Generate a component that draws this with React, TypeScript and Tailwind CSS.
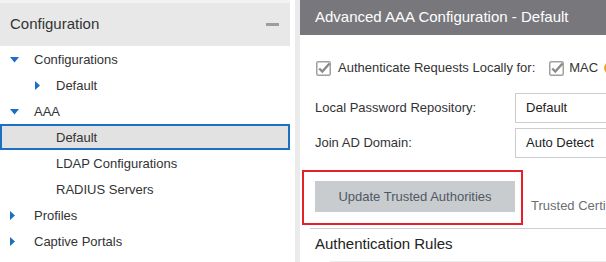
import React from "react";

function Down() {
  return (
    <svg width="9" height="6" viewBox="0 0 9 6" className="shrink-0">
      <path d="M0 0 L9 0 L4.5 5.5 Z" fill="#1d6fc4" />
    </svg>
  );
}
function Right() {
  return (
    <svg width="5" height="9" viewBox="0 0 5 9" className="shrink-0">
      <path d="M0 0 L5 4.5 L0 9 Z" fill="#1d6fc4" />
    </svg>
  );
}
function Check() {
  return (
    <svg width="15" height="15" viewBox="0 0 15 15" className="shrink-0">
      <rect x="0.75" y="0.75" width="13.5" height="13.5" rx="1.5" fill="#fff" stroke="#a0a0a0" strokeWidth="1.5" />
      <path d="M3.2 7.5 L6.3 10.6 L13.5 2.5" fill="none" stroke="#8a8a8a" strokeWidth="2.4" />
    </svg>
  );
}

function Row({
  icon,
  iconPl,
  textPl,
  label,
  selected,
}: {
  icon?: "down" | "right";
  iconPl: number;
  textPl: number;
  label: string;
  selected?: boolean;
}) {
  return (
    <li
      className={
        "relative h-[26px] flex items-center text-[13px] text-[#333] " +
        (selected ? "bg-[#e2e2e2] border-2 border-[#1c6fc3]" : "")
      }
    >
      {icon && (
        <span
          className="absolute top-0 bottom-0 flex items-center pt-[1px]"
          style={{ left: iconPl - (selected ? 2 : 0) }}
        >
          {icon === "down" ? <Down /> : <Right />}
        </span>
      )}
      <span className="pt-[1px]" style={{ paddingLeft: textPl - (selected ? 2 : 0) }}>{label}</span>
    </li>
  );
}

export default function App() {
  return (
    <div className="flex h-[262px] w-[606px] overflow-hidden bg-white font-['Liberation_Sans',Arial,sans-serif]">
      <div className="w-[295px] shrink-0">
        <div className="w-[290px] h-[46px] border-t-[3px] border-[#f3f3f3] bg-[#e8e8e8] flex items-center justify-between pl-[10px] pr-[11px]">
          <span className="text-[15px] text-[#333]">Configuration</span>
          <span className="w-[13px] h-[3px] bg-[#9d9d9d]" />
        </div>
        <ul className="w-[290px]">
          <Row icon="down" iconPl={10} textPl={34} label="Configurations" />
          <Row icon="right" iconPl={35} textPl={56} label="Default" />
          <Row icon="down" iconPl={10} textPl={34} label="AAA" />
          <Row iconPl={0} textPl={56} label="Default" selected />
          <Row iconPl={0} textPl={56} label="LDAP Configurations" />
          <Row iconPl={0} textPl={56} label="RADIUS Servers" />
          <Row icon="right" iconPl={10} textPl={34} label="Profiles" />
          <Row icon="right" iconPl={10} textPl={34} label="Captive Portals" />
        </ul>
      </div>
      <div className="w-[5px] shrink-0 bg-[#ebebeb]" />
      <div className="flex-1 min-w-0 overflow-hidden">
        <div className="h-[35px] bg-[#78787c] pl-[15px] flex items-center text-[15px] text-white whitespace-nowrap">
          Advanced AAA Configuration - Default
        </div>
        <div className="mt-[25px] h-[16px] pl-[16px] flex items-center whitespace-nowrap text-[13px] text-[#333]">
          <Check />
          <span className="ml-[7px]">Authenticate Requests Locally for:</span>
          <span className="ml-[14px]"><Check /></span>
          <span className="ml-[5px]">MAC</span>
          <span className="ml-[6px] inline-block w-[12px] h-[12px] rounded-full border-2 border-[#f0a020] shrink-0" />
        </div>
        <div className="mt-[17px] flex items-center whitespace-nowrap text-[13px]">
          <span className="pl-[15px] w-[215px] shrink-0 text-[#333]">Local Password Repository:</span>
          <div className="h-[30px] w-[150px] shrink-0 border border-[#cccccc] pl-[10px] flex items-center text-[#222]">Default</div>
        </div>
        <div className="mt-[5px] flex items-center whitespace-nowrap text-[13px]">
          <span className="pl-[15px] w-[215px] shrink-0 text-[#333]">Join AD Domain:</span>
          <div className="h-[30px] w-[150px] shrink-0 border border-[#cccccc] pl-[10px] flex items-center text-[#222]">Auto Detect</div>
        </div>
        <div className="mt-[12px] flex items-start whitespace-nowrap">
          <div className="ml-[2px] w-[221px] h-[55px] shrink-0 border-2 border-[#e5202b] pl-[11px] pt-[9px]">
            <div className="w-[200px] h-[31px] bg-[#c9cccf] flex items-center justify-center text-[13px] text-[#4f5865]">
              Update Trusted Authorities
            </div>
          </div>
          <span className="ml-[8px] mt-[26px] text-[13px] text-[#6b6f75]">Trusted Certificates</span>
        </div>
        <div className="mt-[3px] ml-[10px] border-t border-[#cfcfcf] pl-[5px] pt-[4px] h-[33px] text-[15px] text-[#222] whitespace-nowrap">
          Authentication Rules
        </div>
        <div className="ml-[30px] border-t border-[#ececec]" />
      </div>
    </div>
  );
}
